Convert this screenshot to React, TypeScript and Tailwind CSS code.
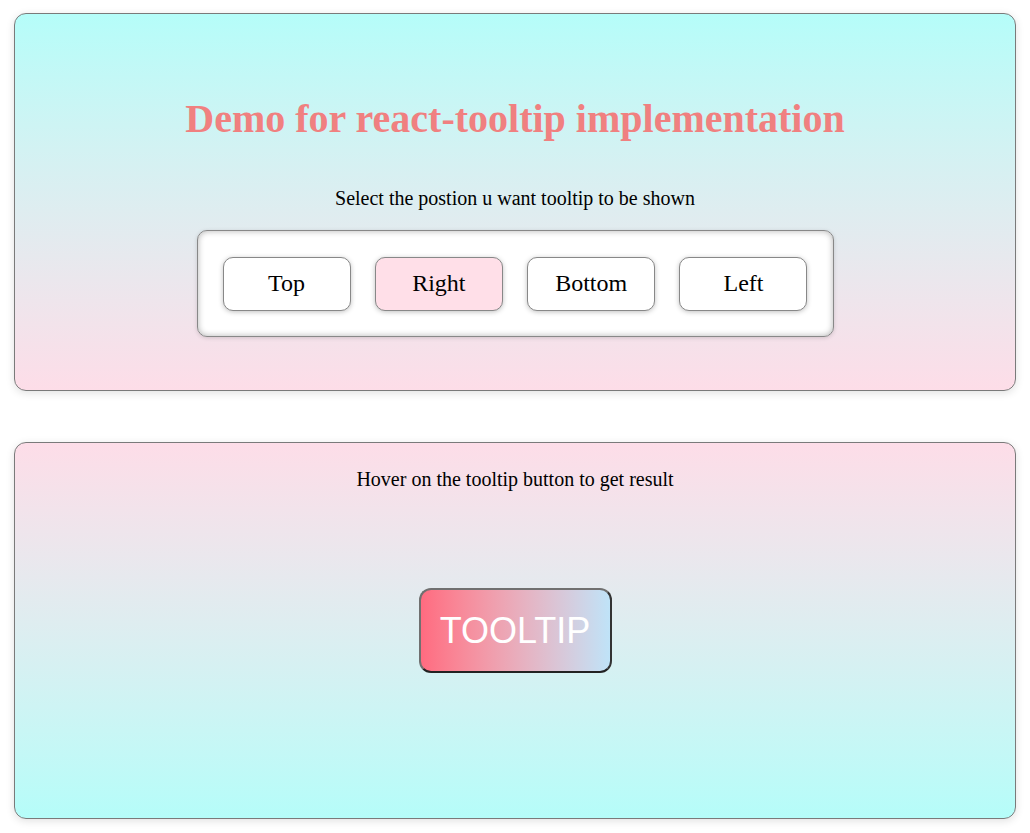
import React from "react";

export default function App() {
  const btns = ["Top", "Right", "Bottom", "Left"];
  return (
    <div className="w-[1030px] h-[833px] bg-white pt-[13px] px-[14px]" style={{ fontFamily: '"Liberation Serif", "Times New Roman", serif' }}>
      <div className="h-[378px] rounded-[12px] border border-[#7a7a7a] bg-gradient-to-b from-[#b5fdf9] to-[#fddde8] shadow-[0_2px_8px_rgba(0,0,0,0.12)] flex flex-col items-center">
        <h1 className="mt-[81px] text-[40px] leading-[48px] font-bold text-[#f08080]">Demo for react-tooltip implementation</h1>
        <p className="mt-[44px] text-[20px] leading-[23px] text-black">Select the postion u want tooltip to be shown</p>
        <div className="mt-[20px] w-[637px] h-[107px] rounded-[10px] border border-[#888] bg-white shadow-[inset_0_0_6px_rgba(0,0,0,0.3),0_1px_4px_rgba(0,0,0,0.15)] flex items-center justify-between px-[25px]">
          {btns.map((b) => (
            <button
              key={b}
              className={`w-[128px] h-[54px] rounded-[10px] border border-[#888] shadow-[0_1px_5px_rgba(0,0,0,0.25)] text-[24px] leading-[28px] pb-[2px] text-black ${b === "Right" ? "bg-[#ffdfe8]" : "bg-white"}`}
            >
              {b}
            </button>
          ))}
        </div>
      </div>
      <div className="mt-[51px] h-[377px] rounded-[12px] border border-[#7a7a7a] bg-gradient-to-b from-[#fddde8] to-[#b5fdf9] shadow-[0_2px_8px_rgba(0,0,0,0.12)] flex flex-col items-center">
        <p className="mt-[25px] text-[20px] leading-[23px] text-black">Hover on the tooltip button to get result</p>
        <button
          className="mt-[97px] w-[193px] h-[85px] rounded-[12px] border-2 border-[#707070] border-b-[#222] border-r-[#333] bg-gradient-to-r from-[#ff6b80] to-[#bfe3f8] text-white text-[36px]"
          style={{ fontFamily: '"Liberation Sans", Arial, sans-serif' }}
        >
          TOOLTIP
        </button>
      </div>
    </div>
  );
}
